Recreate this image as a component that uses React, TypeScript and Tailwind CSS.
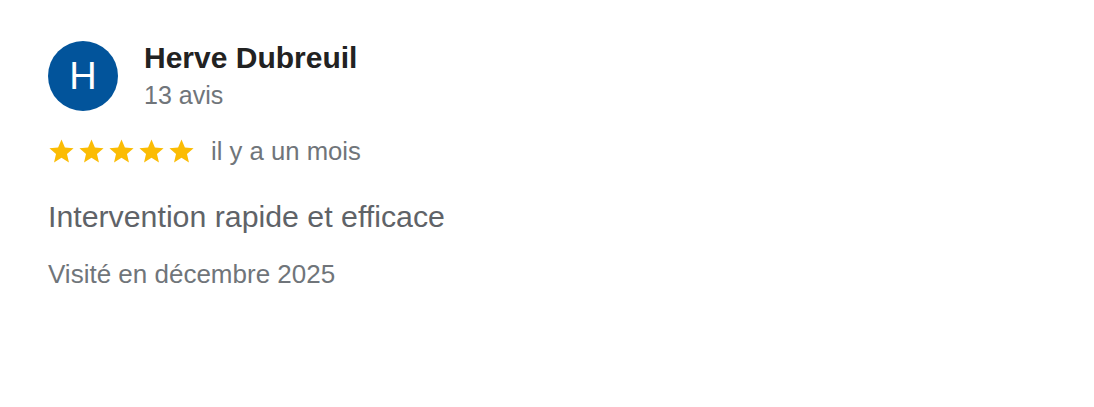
import React from "react";

const Star = () => (
  <svg width="29" height="29" viewBox="0 0 24 24" className="shrink-0">
    <path
      fill="#fbbc04"
      d="M12 17.27L18.18 21l-1.64-7.03L22 9.24l-7.19-.61L12 2 9.19 8.63 2 9.24l5.46 4.73L5.82 21z"
    />
  </svg>
);

export default function App() {
  return (
    <div
      className="w-[1094px] h-[407px] bg-white pl-[48px] pt-[41px]"
      style={{ fontFamily: '"Liberation Sans", Arial, sans-serif' }}
    >
      <div className="flex items-start gap-[26px]">
        <div className="w-[70px] h-[70px] rounded-full bg-[#02549b] flex items-center justify-center text-white text-[38px] leading-none">
          H
        </div>
        <div className="flex flex-col">
          <div className="text-[30px] leading-[34px] font-bold text-[#222222]">Herve Dubreuil</div>
          <div className="mt-[5px] text-[25px] leading-[30px] text-[#70757a]">13 avis</div>
        </div>
      </div>
      <div className="mt-[26px] flex items-center h-[28px]">
        <div className="flex items-center gap-[1px] -ml-[1px]">
          <Star />
          <Star />
          <Star />
          <Star />
          <Star />
        </div>
        <span className="ml-[15px] text-[25.7px] leading-[28px] text-[#70757a]">il y a un mois</span>
      </div>
      <div className="mt-[34px] text-[30.3px] leading-[36px] text-[#5f6368]">Intervention rapide et efficace</div>
      <div className="mt-[24px] text-[26px] leading-[30px] text-[#70757a]">Visité en décembre 2025</div>
    </div>
  );
}
